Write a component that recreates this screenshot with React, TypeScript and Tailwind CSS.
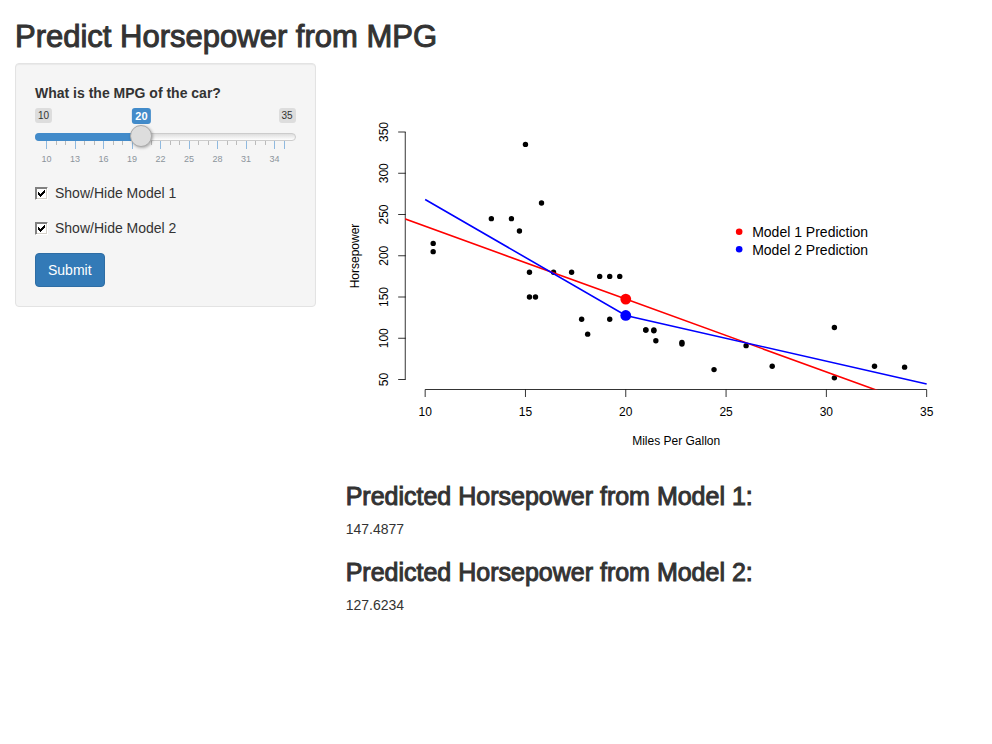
import { useState, type FormEvent } from "react";

const MIN = 10;
const MAX = 35;

// [mpg, hp] for each car
const cars: [number, number][] = [
  [21, 110], [21, 110], [22.8, 93], [21.4, 110], [18.7, 175], [18.1, 105], [14.3, 245], [24.4, 62],
  [22.8, 95], [19.2, 123], [17.8, 123], [16.4, 180], [17.3, 180], [15.2, 180], [10.4, 205], [10.4, 215],
  [14.7, 230], [32.4, 66], [30.4, 52], [33.9, 65], [21.5, 97], [15.5, 150], [15.2, 150], [13.3, 245],
  [19.2, 175], [27.3, 66], [26, 91], [30.4, 113], [15.8, 264], [19.7, 175], [15, 335], [21.4, 109],
];

const model1 = (mpg: number) => 147.4877 - 8.83 * (mpg - 20);
const model2 = (mpg: number) => 127.6234 - (mpg < 20 ? 14.06 : 5.54) * (mpg - 20);

const sx = (mpg: number) => 79 + 20.06 * (mpg - 10);
const sy = (hp: number) => 316.5 - 0.825 * (hp - 50);

function PlotLine({ from, to, model, color }: { from: number; to: number; model: (m: number) => number; color: string }) {
  const knots = [from, 20, to];
  return (
    <polyline
      points={knots.map((m) => `${sx(m)},${sy(model(m))}`).join(" ")}
      fill="none"
      stroke={color}
      strokeWidth="1.6"
      clipPath="url(#plot-area)"
    />
  );
}

function Plot({ mpg, show1, show2 }: { mpg: number; show1: boolean; show2: boolean }) {
  return (
    <svg viewBox="0 0 631 400" className="block h-[400px] w-full" role="img" aria-label="Horsepower by miles per gallon" fontFamily="'Liberation Sans', Arial, sans-serif">
      <clipPath id="plot-area">
        <rect x="59" y="59" width="542" height="267.5" />
      </clipPath>
      {cars.map(([m, h], i) => (
        <circle key={i} cx={sx(m)} cy={sy(h)} r="2.7" />
      ))}
      <g stroke="#000" strokeWidth="0.8">
        <path d={`M59.1 ${sy(350)}V${sy(50)}`} />
        <path d={`M${sx(10)} 326.5H${sx(35)}`} />
        {[50, 100, 150, 200, 250, 300, 350].map((h) => (
          <path key={h} d={`M52 ${sy(h)}H59.5`} />
        ))}
        {[10, 15, 20, 25, 30, 35].map((m) => (
          <path key={m} d={`M${sx(m)} 326.5V334`} />
        ))}
      </g>
      <g fontSize="12" textAnchor="middle">
        {[10, 15, 20, 25, 30, 35].map((m) => (
          <text key={m} x={sx(m)} y="353">{m}</text>
        ))}
        {[50, 100, 150, 200, 250, 300, 350].map((h) => (
          <text key={h} transform={`translate(42 ${sy(h)}) rotate(-90)`}>{h}</text>
        ))}
        <text x="330" y="382">Miles Per Gallon</text>
        <text transform="translate(13 193) rotate(-90)">Horsepower</text>
      </g>
      {show1 && <PlotLine from={8} to={36} model={model1} color="#f00" />}
      {show2 && <PlotLine from={10} to={35} model={model2} color="#00f" />}
      <circle cx="393" cy="168.7" r="3.3" fill="#f00" />
      <circle cx="393" cy="186.2" r="3.3" fill="#00f" />
      <g fontSize="14">
        <text x="406" y="174">Model 1 Prediction</text>
        <text x="406" y="192">Model 2 Prediction</text>
      </g>
      {show1 && <circle cx={sx(mpg)} cy={sy(model1(mpg))} r="5.4" fill="#f00" />}
      {show2 && <circle cx={sx(mpg)} cy={sy(model2(mpg))} r="5.4" fill="#00f" />}
    </svg>
  );
}

function MpgSlider({ value, onChange }: { value: number; onChange: (v: number) => void }) {
  const fraction = (value - MIN) / (MAX - MIN);
  const position = `calc(11px + (100% - 22px) * ${fraction})`;
  const ticks = Array.from({ length: MAX - MIN + 1 }, (_, i) => MIN + i);
  return (
    <div className="mb-[15px]">
      <div className="relative flex h-[17px] items-start justify-between text-[10px] leading-[15px]">
        <span className="rounded-[3px] bg-[#dddddd] px-[3px]">{MIN}</span>
        <output
          htmlFor="mpg"
          className="absolute top-0 -translate-x-1/2 rounded-[3px] bg-[#428bca] px-[3px] text-[11px] leading-4 font-bold text-white"
          style={{ left: position }}
        >
          {value}
        </output>
        <span className="rounded-[3px] bg-[#dddddd] px-[3px]">{MAX}</span>
      </div>
      <div className="relative h-[22px]">
        <div className="absolute inset-x-0 top-2 h-2 overflow-hidden rounded-lg border border-[#cccccc] bg-linear-to-b from-[#dedede] to-white" />
        <div className="absolute top-2 left-0 h-2 rounded-l-lg bg-[#428bca]" style={{ width: position }} />
        <input
          id="mpg"
          type="range"
          min={MIN}
          max={MAX}
          value={value}
          onChange={(e) => onChange(Number(e.target.value))}
          className="relative block h-[22px] w-full cursor-pointer appearance-none bg-transparent [&::-webkit-slider-thumb]:size-[22px] [&::-webkit-slider-thumb]:appearance-none [&::-webkit-slider-thumb]:rounded-full [&::-webkit-slider-thumb]:border [&::-webkit-slider-thumb]:border-[#aaaaaa] [&::-webkit-slider-thumb]:bg-[#dddddd] [&::-webkit-slider-thumb]:shadow-[1px_1px_3px_rgba(0,0,0,0.3)]"
        />
      </div>
      <div className="-mt-[6px] flex h-[27px] justify-between px-[11px] text-[9px] leading-3 text-[#8c949c]">
        {ticks.map((t) => {
          const labelled = (t - MIN) % 3 === 0;
          return (
            <div key={t} className="flex w-px flex-col items-center">
              <span className={labelled || t === MAX ? "h-2 w-px bg-[#8fb9df]" : "h-1 w-px bg-[#bbbbbb]"} />
              {labelled && <span className="mt-1">{t}</span>}
            </div>
          );
        })}
      </div>
    </div>
  );
}

function Check({ id, label, checked, onChange }: { id: string; label: string; checked: boolean; onChange: (v: boolean) => void }) {
  return (
    <div className="mb-[15px] flex h-5 items-center gap-[7px]">
      <span className="relative size-[13px]">
        <input
          id={id}
          type="checkbox"
          checked={checked}
          onChange={(e) => onChange(e.target.checked)}
          className="peer block size-[13px] appearance-none border border-t-[#808080] border-r-white border-b-white border-l-[#808080] bg-white shadow-[inset_1px_1px_0_#808080,inset_-1px_-1px_0_#d4d0c8]"
        />
        <svg viewBox="0 0 13 13" className="pointer-events-none absolute inset-0 hidden size-[13px] peer-checked:block" aria-hidden="true" shapeRendering="crispEdges">
          <path d="M3 5h1v1h1v1h1v-1h1v-1h1v-1h1v-1h1v3h-1v1h-1v1h-1v1h-1v1h-1v-1h-1v-1h-1z" />
        </svg>
      </span>
      <label htmlFor={id}>{label}</label>
    </div>
  );
}

function Prediction({ title, value }: { title: string; value: number }) {
  return (
    <section className="pt-5">
      <h3 className="mb-[10px] text-[25px] leading-[26px] [-webkit-text-stroke:1px_#333333]">{title}</h3>
      <p>{value.toFixed(4)}</p>
    </section>
  );
}

export default function App() {
  const [mpg, setMpg] = useState(20);
  const [show1, setShow1] = useState(true);
  const [show2, setShow2] = useState(true);
  const [applied, setApplied] = useState({ mpg: 20, show1: true, show2: true });

  const submit = (e: FormEvent) => {
    e.preventDefault();
    setApplied({ mpg, show1, show2 });
  };

  return (
    <main className="bg-white px-[15px] pt-5 font-['Liberation_Sans',Arial,sans-serif] text-[14px] leading-5 text-[#333333]">
      <h1 className="mb-[10px] text-[31px] leading-[33px] [-webkit-text-stroke:1px_#333333]">Predict Horsepower from MPG</h1>
      <div className="-mx-[15px] flex">
        <div className="w-1/3 px-[15px]">
          <form
            onSubmit={submit}
            className="rounded border border-[#e3e3e3] bg-[#f5f5f5] p-[19px] shadow-[inset_0_1px_1px_rgba(0,0,0,0.05)]"
          >
            <label htmlFor="mpg" className="mb-[5px] block font-bold">What is the MPG of the car?</label>
            <MpgSlider value={mpg} onChange={setMpg} />
            <Check id="model1" label="Show/Hide Model 1" checked={show1} onChange={setShow1} />
            <Check id="model2" label="Show/Hide Model 2" checked={show2} onChange={setShow2} />
            <button type="submit" className="block rounded border border-[#2e6da4] bg-[#337ab7] px-3 py-[6px] text-white">
              Submit
            </button>
          </form>
        </div>
        <div className="w-2/3 px-[15px]">
          <Plot {...applied} />
          <Prediction title="Predicted Horsepower from Model 1:" value={model1(applied.mpg)} />
          <Prediction title="Predicted Horsepower from Model 2:" value={model2(applied.mpg)} />
        </div>
      </div>
    </main>
  );
}
